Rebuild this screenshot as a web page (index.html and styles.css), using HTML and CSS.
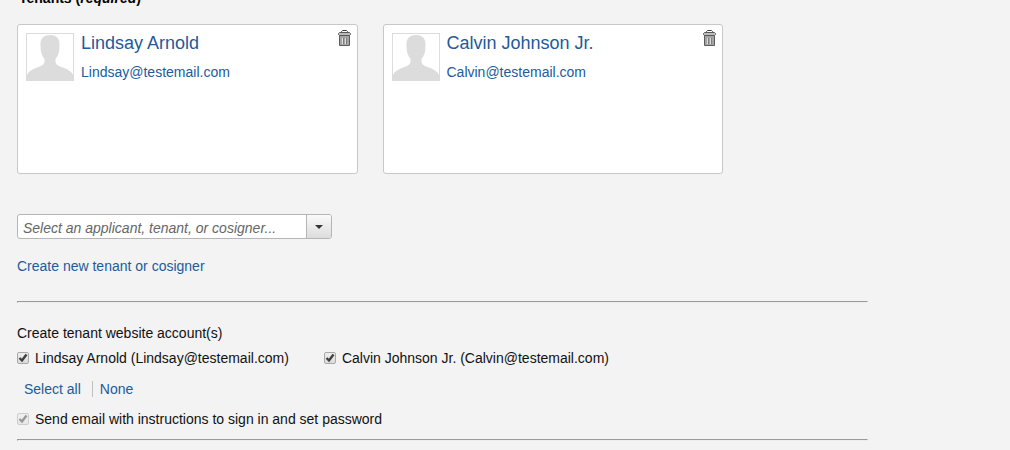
FILE: index.html
```html
<!DOCTYPE html>
<html lang="en">
<head>
    <meta charset="UTF-8">
    <meta name="viewport" content="width=device-width, initial-scale=1.0">
    <title>Tenants</title>
    <link rel="stylesheet" href="styles.css">
</head>
<body>
    <!-- Shared drawings -->
    <svg class="symbols" aria-hidden="true">
        <symbol id="person" viewBox="0 0 46 46">
            <path fill="#dcdcdc" d="M23 1C30 1 33 5 32.500 12C32.500 18 31 22 28.500 25V28C29 31 32 32 36 33.500C41 35.500 45 38 46 41V46H0V41C1 38 5 35.500 10 33.500C14 32 17 31 17.500 28V25C15 22 13.500 18 13.500 12C13 5 16 1 23 1Z"/>
        </symbol>
        <symbol id="trash" viewBox="0 0 13 16">
            <path fill="none" stroke="#3c3c3c" d="M3.500 3V1.500L4.500 .5H8.500L9.500 1.500V3"/>
            <path fill="#a4a4a4" stroke="#5c5c5c" d="M1.500 5.500H11.500V15.500H1.500Z"/>
            <path fill="#bcbcbc" stroke="#585858" d="M1.500 2.500H11.500L12.500 3.500V4.500L11.500 5.500H1.500L.5 4.500V3.500Z"/>
            <path fill="none" stroke="#dedede" d="M4.500 8V14M7.500 8V14"/>
            <path fill="none" stroke="#7c7c7c" d="M5.500 8V14M8.500 8V14"/>
        </symbol>
    </svg>

    <main class="page">
        <h2 class="section-title">Tenants (<em>required</em>)</h2>

        <div class="tenant-cards">
            <article class="tenant-card">
                <svg class="avatar" aria-hidden="true"><use href="#person"/></svg>
                <div class="tenant-info">
                    <a class="tenant-name" href="#">Lindsay Arnold</a>
                    <a class="tenant-email" href="#">Lindsay@testemail.com</a>
                </div>
                <button class="remove" type="button" aria-label="Remove Lindsay Arnold">
                    <svg><use href="#trash"/></svg>
                </button>
            </article>
            <article class="tenant-card">
                <svg class="avatar" aria-hidden="true"><use href="#person"/></svg>
                <div class="tenant-info">
                    <a class="tenant-name" href="#">Calvin Johnson Jr.</a>
                    <a class="tenant-email" href="#">Calvin@testemail.com</a>
                </div>
                <button class="remove" type="button" aria-label="Remove Calvin Johnson Jr.">
                    <svg><use href="#trash"/></svg>
                </button>
            </article>
        </div>

        <div class="combobox">
            <input type="text" placeholder="Select an applicant, tenant, or cosigner..." aria-label="Select an applicant, tenant, or cosigner">
            <button type="button" aria-label="Show list">
                <svg viewBox="0 0 8 4"><path fill="#333" d="M0 0H8L4 4Z"/></svg>
            </button>
        </div>
        <a class="create-link" href="#">Create new tenant or cosigner</a>

        <hr>

        <fieldset class="accounts">
            <legend>Create tenant website account(s)</legend>
            <div class="account-list">
                <label class="check"><input type="checkbox" checked>Lindsay Arnold (Lindsay@testemail.com)</label>
                <label class="check"><input type="checkbox" checked>Calvin Johnson Jr. (Calvin@testemail.com)</label>
            </div>
            <div class="select-links">
                <a href="#">Select all</a>
                <a href="#">None</a>
            </div>
            <label class="check"><input type="checkbox" checked disabled>Send email with instructions to sign in and set password</label>
        </fieldset>

        <hr>
    </main>
</body>
</html>
```
FILE: styles.css
```css
/* General */
* {
    box-sizing: border-box;
}

body {
    margin: 0;
    background: #f3f3f3;
    color: #111;
    font-family: "Liberation Sans", Arial, sans-serif;
    font-size: 14px;
    line-height: 16px;
}

a {
    color: #235a9b;
    text-decoration: none;
}

a:hover {
    text-decoration: underline;
}

hr {
    margin: 0;
    border: 1px solid;
    border-color: #9a9a9a #eee #eee #9a9a9a;
}

.symbols {
    display: none;
}

.page {
    max-width: 885px;
    padding: 0 17px;
}

.section-title {
    padding-left: 2px;
    margin: -10px 0 18px;
    color: #000;
    font-size: 14px;
}

/* Tenant cards */
.tenant-cards {
    display: flex;
    gap: 25px;
    max-width: 706px;
    margin-bottom: 40px;
}

.tenant-card {
    display: flex;
    flex: 1;
    align-items: flex-start;
    min-height: 150px;
    padding: 8px 6px 8px 8px;
    background: #fff;
    border: 1px solid #c8c8c8;
    border-radius: 3px;
}

.avatar {
    flex: none;
    width: 48px;
    height: 48px;
    border: 1px solid #dcdcdc;
}

.tenant-info {
    display: flex;
    flex: 1;
    flex-direction: column;
    align-items: flex-start;
    gap: 11px;
    padding-left: 7px;
}

.tenant-name {
    font-size: 18px;
    line-height: 20px;
}

.remove {
    padding: 0;
    margin-top: -3px;
    background: none;
    border: none;
    cursor: pointer;
}

.remove svg {
    display: block;
    width: 13px;
    height: 16px;
}

/* Tenant picker */
.combobox {
    display: flex;
    max-width: 315px;
    height: 25px;
    margin-bottom: 19px;
    background: #fff;
    border: 1px solid #b5b5b5;
    border-radius: 3px;
    overflow: hidden;
}

.combobox input {
    flex: 1;
    min-width: 0;
    padding: 3px 5px 0;
    background: none;
    border: none;
    font: inherit;
}

.combobox input::placeholder {
    color: #666;
    font-style: italic;
}

.combobox button {
    display: flex;
    align-items: center;
    justify-content: center;
    width: 25px;
    padding: 0;
    background: linear-gradient(#fafafa, #dcdcdc);
    border: none;
    border-left: 1px solid #b5b5b5;
}

.combobox button svg {
    width: 8px;
    height: 4px;
}

.create-link {
    display: inline-block;
    margin-bottom: 27px;
}

/* Website accounts */
.accounts {
    min-width: 0;
    padding: 0;
    margin: 22px 0 12px;
    border: none;
}

.accounts legend {
    padding: 0;
    margin-bottom: 9px;
}

.account-list {
    display: flex;
    flex-wrap: wrap;
    gap: 8px 35px;
}

.check {
    display: flex;
    align-items: center;
    gap: 6px;
}

.check input {
    flex: none;
    appearance: none;
    width: 12px;
    height: 12px;
    margin: 0;
    background: url("data:image/svg+xml,%3Csvg xmlns='http://www.w3.org/2000/svg' viewBox='0 0 10 10'%3E%3Cpath d='M1.500 5L4 7.500L8.500 1.500' fill='none' stroke='%23404040' stroke-width='2.400'/%3E%3C/svg%3E") center / 10px no-repeat, linear-gradient(#eee, #dcdcdc);
    border: 1px solid #a8a8a8;
    border-radius: 2px;
}

.check input:not(:checked) {
    background: linear-gradient(#eee, #dcdcdc);
}

.check input:disabled {
    opacity: 0.5;
}

.select-links {
    display: flex;
    margin: 15px 7px 14px;
}

.select-links a + a {
    padding-left: 7px;
    margin-left: 11px;
    border-left: 1px solid #c0c0c0;
}
```
